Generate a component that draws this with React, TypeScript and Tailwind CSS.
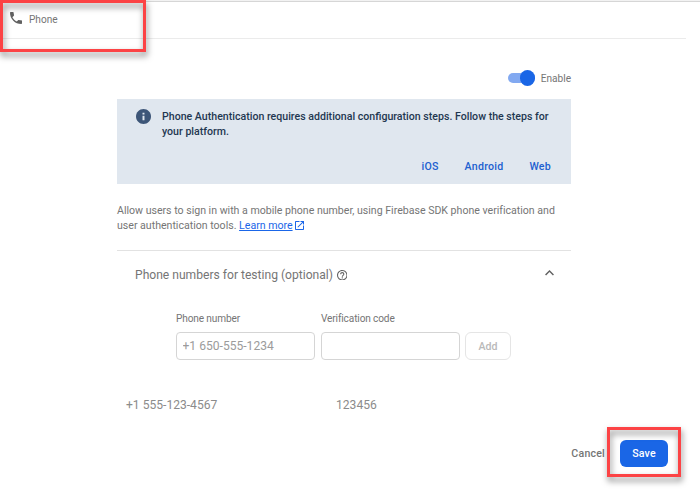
import React from "react";

function PhoneIcon() {
  return (
    <svg viewBox="3 3 18 18" className="h-[12px] w-[12px] fill-[#616161]">
      <path d="M6.62 10.79c1.44 2.83 3.76 5.14 6.59 6.59l2.2-2.2c.27-.27.67-.36 1.02-.24 1.12.37 2.33.57 3.57.57.55 0 1 .45 1 1V20c0 .55-.45 1-1 1-9.39 0-17-7.61-17-17 0-.55.45-1 1-1h3.5c.55 0 1 .45 1 1 0 1.25.2 2.45.57 3.57.11.35.03.74-.25 1.02l-2.2 2.2z" />
    </svg>
  );
}

function InfoIcon() {
  return (
    <svg viewBox="2 2 20 20" className="h-[15px] w-[15px] shrink-0 fill-[#3d5678]">
      <path d="M12 2C6.48 2 2 6.48 2 12s4.48 10 10 10 10-4.48 10-10S17.52 2 12 2z" />
      <path className="fill-[#e0e7ef]" d="M10.7 11h2.6v6h-2.6zM10.7 7h2.6v2.4h-2.6z" />
    </svg>
  );
}

function OpenIcon() {
  return (
    <svg viewBox="3 3 18 18" className="ml-[2px] inline-block h-[9px] w-[9px] fill-[#1a66e8] align-[-1px]">
      <path d="M19 19H5V5h7V3H5c-1.11 0-2 .9-2 2v14c0 1.1.89 2 2 2h14c1.1 0 2-.9 2-2v-7h-2v7zM14 3v2h3.59l-9.83 9.83 1.41 1.41L19 6.41V10h2V3h-7z" />
    </svg>
  );
}

function HelpIcon() {
  return (
    <svg viewBox="2 2 20 20" className="ml-[4px] h-[10.5px] w-[10.5px] fill-[#616161]">
      <path d="M11 18h2v-2h-2v2zm1-16C6.48 2 2 6.48 2 12s4.48 10 10 10 10-4.48 10-10S17.52 2 12 2zm0 18c-4.41 0-8-3.59-8-8s3.59-8 8-8 8 3.59 8 8-3.59 8-8 8zm0-14c-2.21 0-4 1.79-4 4h2c0-1.1.9-2 2-2s2 .9 2 2c0 2-3 1.75-3 5h2c0-2.25 3-2.5 3-5 0-2.21-1.79-4-4-4z" />
    </svg>
  );
}

function ChevronUp() {
  return (
    <svg viewBox="6 8 12 7.41" className="mt-[-4px] mr-[17px] h-[5.5px] w-[9px] fill-[#616161]">
      <path d="M12 8l-6 6 1.41 1.41L12 10.83l4.59 4.58L18 14z" />
    </svg>
  );
}

export default function App() {
  return (
    <div className="relative flex h-[494px] w-[700px] flex-col overflow-hidden bg-white font-['Roboto',sans-serif] text-[10.6px] leading-[15px] text-[#757575]">
      <div className="h-[2px] shrink-0 border-b border-[#d6d6d6] bg-[#f2f2f2]" />
      <header className="flex h-[37px] w-[686px] shrink-0 items-start border-b border-[#ebebeb] pt-[10px] pl-[9.5px]">
        <PhoneIcon />
        <span className="ml-[7.5px] text-[10.1px]">Phone</span>
      </header>

      <main className="ml-[117px] flex w-[454px] flex-col">
        <div className="mt-[31px] flex h-[16px] items-center justify-end">
          <div className="flex h-[10px] w-[27px] items-center justify-end rounded-full bg-[#82a9f1]">
            <div className="h-[16px] w-[15px] shrink-0 rounded-full bg-[#1a66e6]" />
          </div>
          <span className="ml-[6px] text-[10.1px]">Enable</span>
        </div>

        <section className="mt-[13px] flex h-[85px] flex-col bg-[#e0e7ef] pt-[10px] font-medium">
          <div className="flex pl-[19px] text-[#1f3751]">
            <InfoIcon />
            <p className="ml-[11px] whitespace-nowrap">
              Phone Authentication requires additional configuration steps. Follow the steps for
              <br />
              your platform.
            </p>
          </div>
          <nav className="mt-[20px] flex justify-end gap-[26px] pr-[20px] tracking-[0.25px] text-[#2160d0]">
            <a>iOS</a>
            <a>Android</a>
            <a>Web</a>
          </nav>
        </section>

        <p className="mt-[19px] h-[30px] whitespace-nowrap tracking-[-0.01px]">
          Allow users to sign in with a mobile phone number, using Firebase SDK phone verification and
          <br />
          user authentication tools. <a className="text-[#1a66e8] underline">Learn more</a>
          <OpenIcon />
        </p>

        <div className="mt-[17px] flex h-[49px] items-center border-t border-[#e2e2e2] pl-[18px]">
          <h2 className="text-[12.1px]">Phone numbers for testing (optional)</h2>
          <HelpIcon />
          <div className="ml-auto">
            <ChevronUp />
          </div>
        </div>

        <form className="mt-[12px] ml-[59px] flex items-end">
          <label className="flex w-[139px] flex-col text-[10.1px] tracking-[-0.13px]">
            <span>Phone number</span>
            <input
              placeholder="+1 650-555-1234"
              className="mt-[6px] h-[28px] w-full rounded-[4px] border border-[#d5d5d5] px-[5.5px] text-[12.1px] tracking-normal placeholder:text-[#9b9b9b]"
            />
          </label>
          <label className="ml-[6px] flex w-[139px] flex-col text-[10.1px] tracking-[-0.13px]">
            <span>Verification code</span>
            <input className="mt-[6px] h-[28px] w-full rounded-[4px] border border-[#d5d5d5]" />
          </label>
          <button type="button" className="ml-[5px] h-[28px] w-[46px] rounded-[6px] border border-[#e5e5e5] font-medium text-[#b9b9b9]">
            Add
          </button>
        </form>

        <div className="mt-[38px] flex pl-[9px] text-[12.1px] text-[#8b8b8b]">
          <span className="w-[210px]">+1 555-123-4567</span>
          <span>123456</span>
        </div>
      </main>

      <footer className="mt-[27px] flex h-[27px] items-center justify-end pr-[32px] font-medium tracking-[0.2px]">
        <button className="mr-[15px]">Cancel</button>
        <button className="h-[27px] w-[48px] rounded-[6px] bg-[#1a66e6] text-white">Save</button>
      </footer>

      <div className="pointer-events-none absolute top-0 left-0 h-[52px] w-[146px] border-[3px] border-[#fc4345] drop-shadow-[1px_4px_3px_rgba(0,0,0,0.5)]" />
      <div className="pointer-events-none absolute top-[427px] left-[607px] h-[50px] w-[74px] border-[3px] border-[#fc4345] drop-shadow-[1px_4px_3px_rgba(0,0,0,0.5)]" />
    </div>
  );
}
